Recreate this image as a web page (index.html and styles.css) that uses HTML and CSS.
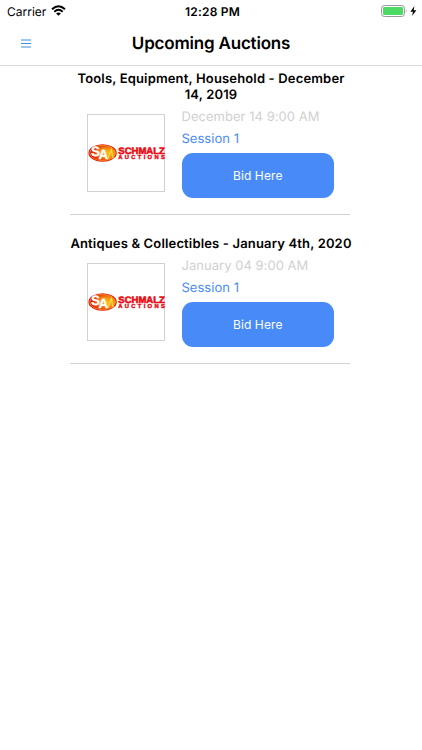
FILE: index.html
```html
<!DOCTYPE html>
<html lang="en">
<head>
    <meta charset="UTF-8">
    <meta name="viewport" content="width=device-width, initial-scale=1.0">
    <title>Upcoming Auctions</title>
    <link rel="stylesheet" href="styles.css">
</head>
<body>
    <svg width="0" height="0" class="defs">
        <defs>
            <radialGradient id="badge" cx="0.68" cy="0.5" r="0.62">
                <stop offset="0" stop-color="#ffc21c"/>
                <stop offset="0.5" stop-color="#f88a12"/>
                <stop offset="1" stop-color="#df1a08"/>
            </radialGradient>
            <symbol id="schmalz" viewBox="0 0 78 20">
                <ellipse cx="14.6" cy="10" rx="14.2" ry="8.8" fill="#e01b0c"/>
                <ellipse cx="14.6" cy="10" rx="12.9" ry="7.6" fill="url(#badge)" stroke="#ffb920" stroke-width="0.6"/>
                <text x="3" y="12.6" class="logo-s">S</text>
                <text x="10.4" y="16.4" class="logo-a">A</text>
                <path d="M20 15.4L23.4 6.5L25 15.4" fill="none" stroke="#ffd63c" stroke-width="1.4"/>
                <text x="30.3" y="11" textLength="46.5" lengthAdjust="spacingAndGlyphs" class="logo-name">SCHMALZ</text>
                <text x="30.3" y="16.1" textLength="46.5" lengthAdjust="spacing" class="logo-sub">AUCTIONS</text>
            </symbol>
        </defs>
    </svg>

    <div class="status-bar">
        <div class="carrier">
            <span>Carrier</span>
            <svg class="wifi" width="15" height="11" viewBox="0 0 15 11">
                <path d="M1 4.2Q7.5 -1.6 14 4.2" fill="none" stroke="#000" stroke-width="2"/>
                <path d="M3.3 6.7Q7.5 3 11.7 6.7" fill="none" stroke="#000" stroke-width="1.9"/>
                <path d="M5.1 8.4Q7.5 6.4 9.9 8.4L7.5 10.8Z"/>
            </svg>
        </div>
        <div class="time">12:28 PM</div>
        <div class="power">
            <svg width="37" height="12" viewBox="0 0 37 12">
                <rect x="0.5" y="0.5" width="23" height="11" rx="2.8" fill="#fff" stroke="#999"/>
                <rect x="2" y="2" width="20" height="8" rx="1.3" fill="#4cd964"/>
                <path d="M24.8 4Q26.4 6 24.8 8Z" fill="#999"/>
                <path d="M33.4 1L29.4 6.7H32L31 11L35.4 5.2H32.7Z"/>
            </svg>
        </div>
    </div>

    <header class="nav">
        <svg class="menu" width="10" height="9" viewBox="0 0 10 9">
            <path d="M0 1H10M0 4.5H10M0 8H10" stroke="#3a90e0" stroke-width="1"/>
        </svg>
        <h1>Upcoming Auctions</h1>
    </header>

    <main class="auctions">
        <section class="auction">
            <h2>Tools, Equipment, Household - December<br>14, 2019</h2>
            <div class="auction-body">
                <div class="logo"><svg width="78" height="20"><use href="#schmalz"/></svg></div>
                <div class="details">
                    <p class="date">December 14 9:00 AM</p>
                    <p class="session">Session 1</p>
                    <button>Bid Here</button>
                </div>
            </div>
        </section>

        <section class="auction">
            <h2>Antiques &amp; Collectibles - January 4th, 2020</h2>
            <div class="auction-body">
                <div class="logo"><svg width="78" height="20"><use href="#schmalz"/></svg></div>
                <div class="details">
                    <p class="date">January 04 9:00 AM</p>
                    <p class="session">Session 1</p>
                    <button>Bid Here</button>
                </div>
            </div>
        </section>
    </main>
</body>
</html>
```

FILE: styles.css
```css
:root {
    --primary-color: #488bf8;
    --border-color: #d2d2d2;
    --light-text: #d0d0d0;
}

* {
    box-sizing: border-box;
}

body {
    margin: 0;
    min-height: 100vh;
    background-color: #fff;
    color: #000;
    font-family: Inter, "Liberation Sans", sans-serif;
    text-rendering: geometricPrecision;
}

h1, h2, p {
    margin: 0;
}

svg {
    display: block;
}

.defs {
    position: absolute;
}

.status-bar {
    display: grid;
    grid-template-columns: 1fr auto 1fr;
    align-items: center;
    height: 22px;
    padding: 0 4px 0 7px;
    font-size: 12px;
}

.carrier {
    display: flex;
    align-items: center;
    gap: 5px;
}

.wifi {
    margin-bottom: 2px;
}

.time {
    font-weight: 600;
    letter-spacing: 0.2px;
}

.power {
    display: flex;
    justify-content: flex-end;
    margin-bottom: 1px;
}

.nav {
    display: grid;
    grid-template-columns: 1fr auto 1fr;
    align-items: center;
    height: 44px;
    border-bottom: 1px solid #d9d9d9;
}

.menu {
    margin: 0 0 1px 21px;
}

h1 {
    padding-top: 1px;
    font-size: 17px;
    font-weight: 600;
    line-height: 22px;
    letter-spacing: -0.2px;
}

.auctions {
    width: 280px;
    margin: 5px auto 0 70px;
}

.auction {
    padding-bottom: 16px;
    margin-bottom: 21px;
    border-bottom: 1px solid var(--border-color);
}

h2 {
    margin-right: -2px;
    font-size: 13px;
    font-weight: 600;
    line-height: 16px;
    letter-spacing: 0.16px;
    text-align: center;
    white-space: nowrap;
}

.auction-body {
    display: flex;
    gap: 16.5px;
    padding: 11px 16px 0 17px;
}

.logo {
    display: flex;
    align-items: center;
    width: 78px;
    height: 78px;
    border: 1px solid var(--border-color);
}

.logo svg {
    flex: none;
}

.logo-s,
.logo-a {
    fill: #fff;
    stroke: #fff;
    stroke-width: 0.3px;
    font: bold 13.5px "Liberation Sans", sans-serif;
}

.logo-name {
    fill: #ea0c16;
    stroke: #ea0c16;
    stroke-width: 0.6px;
    font: bold 9.4px "Liberation Sans", sans-serif;
}

.logo-sub {
    fill: #ea0c16;
    stroke: #ea0c16;
    stroke-width: 0.4px;
    font: bold 5.8px "Liberation Sans", sans-serif;
}

.details {
    flex: 1;
    margin-top: -8px;
}

.date,
.session {
    font-size: 13px;
    line-height: 22px;
    letter-spacing: 0.03px;
    white-space: nowrap;
}

.date {
    color: var(--light-text);
}

.session {
    color: var(--primary-color);
}

button {
    display: block;
    width: 152.5px;
    height: 45px;
    margin-top: 3px;
    padding: 0;
    border: none;
    border-radius: 11px;
    background-color: var(--primary-color);
    color: white;
    font-family: inherit;
    font-size: 12px;
    letter-spacing: 0.1px;
}
```
